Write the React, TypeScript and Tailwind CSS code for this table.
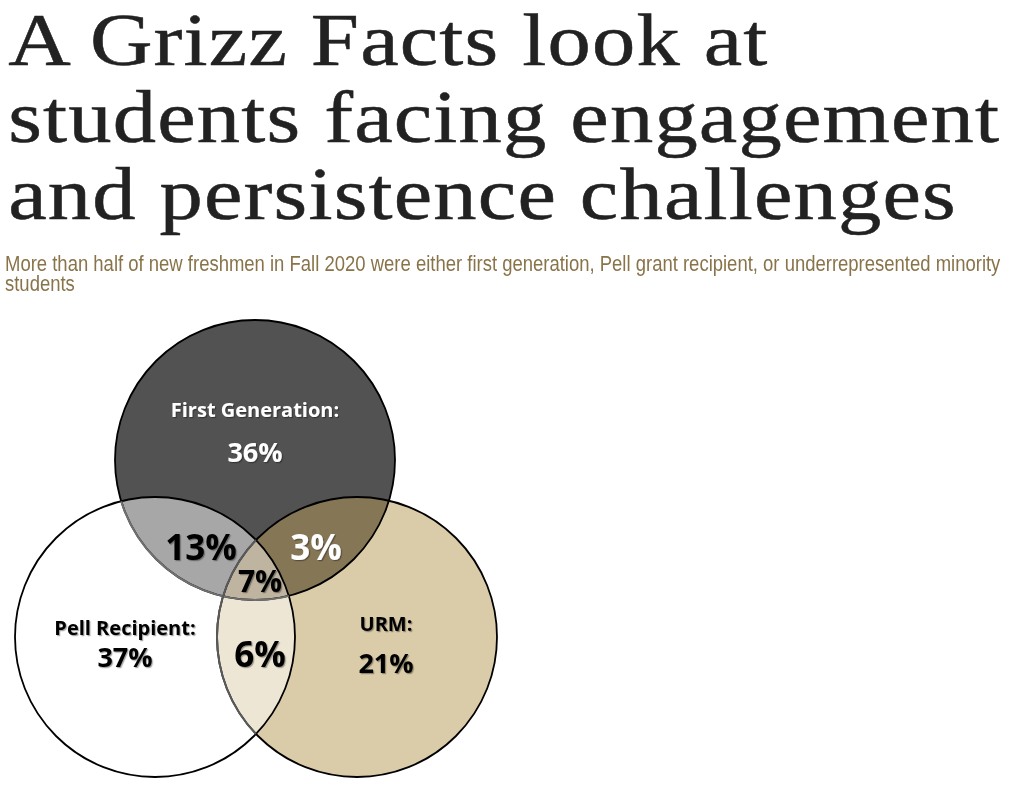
const T = { cx: 255, cy: 150, r: 140 }
const L = { cx: 155, cy: 327, r: 140 }
const R = { cx: 357, cy: 327, r: 140 }

const Venn = () => {
    return (
        <svg width="510" height="475" viewBox="0 0 510 475" className="block">
            <defs>
                <clipPath id="clipL">
                    <circle cx={L.cx} cy={L.cy} r={L.r} />
                </clipPath>
                <clipPath id="clipR">
                    <circle cx={R.cx} cy={R.cy} r={R.r} />
                </clipPath>
                <filter id="shadow" x="-20%" y="-20%" width="140%" height="140%">
                    <feDropShadow dx="1.2" dy="1.2" stdDeviation="0.7" floodColor="#000" floodOpacity="0.35" />
                </filter>
            </defs>

            {/* base circles */}
            <circle cx={L.cx} cy={L.cy} r={L.r} fill="#ffffff" />
            <circle cx={R.cx} cy={R.cy} r={R.r} fill="#dbcca9" />
            <circle cx={T.cx} cy={T.cy} r={T.r} fill="#525252" />

            {/* overlaps */}
            <circle cx={R.cx} cy={R.cy} r={R.r} fill="#ede6d4" clipPath="url(#clipL)" />
            <circle cx={T.cx} cy={T.cy} r={T.r} fill="#a7a7a7" clipPath="url(#clipL)" />
            <circle cx={T.cx} cy={T.cy} r={T.r} fill="#857656" clipPath="url(#clipR)" />
            <g clipPath="url(#clipL)">
                <circle cx={T.cx} cy={T.cy} r={T.r} fill="#beb4a0" clipPath="url(#clipR)" />
            </g>

            {/* outlines */}
            <circle cx={T.cx} cy={T.cy} r={T.r} fill="none" stroke="#000" strokeWidth="1.8" />
            <circle cx={L.cx} cy={L.cy} r={L.r} fill="none" stroke="#000" strokeWidth="1.8" />
            <circle cx={R.cx} cy={R.cy} r={R.r} fill="none" stroke="#000" strokeWidth="1.8" />
            {/* softer inner arcs */}
            <circle cx={T.cx} cy={T.cy} r={T.r} fill="none" stroke="#707070" strokeWidth="2" clipPath="url(#clipL)" />
            <circle cx={R.cx} cy={R.cy} r={R.r} fill="none" stroke="#5a5a5a" strokeWidth="2" clipPath="url(#clipL)" />

            <g fontFamily="'Open Sans', Lato, sans-serif" fontWeight="700" textAnchor="middle" filter="url(#shadow)">
                <text x="255" y="107" fontSize="20" fill="#fff">First Generation:</text>
                <text x="255" y="152" fontSize="27" fill="#fff">36%</text>
                <text x="201" y="250" fontSize="35" fill="#000">13%</text>
                <text x="316" y="250" fontSize="35" fill="#fff">3%</text>
                <text x="260" y="282" fontSize="30" fill="#000">7%</text>
                <text x="260" y="357" fontSize="35" fill="#000">6%</text>
                <text x="125" y="325" fontSize="20" fill="#000">Pell Recipient:</text>
                <text x="125" y="357" fontSize="27" fill="#000">37%</text>
                <text x="386" y="321" fontSize="20" fill="#000">URM:</text>
                <text x="386" y="363" fontSize="27" fill="#000">21%</text>
            </g>
        </svg>
    )
}

const App = () => {
    return (
        <div className="w-[1015px] h-[791px] bg-white overflow-hidden">
            <h1 className="pt-[2px] pl-[7px] w-[860px] origin-left scale-x-[1.17] whitespace-nowrap text-[#222222] text-[74px] leading-[77px] tracking-[1px] font-normal font-['Liberation_Serif','DejaVu_Serif',serif] [-webkit-text-stroke:0.5px_#222222]">
                A Grizz Facts look at
                <br />
                students facing engagement
                <br />
                and persistence challenges
            </h1>
            <p className="mt-[21px] ml-[5px] w-[1200px] origin-left scale-x-[0.84] text-[#89744a] text-[22px] leading-[20px] font-['Liberation_Sans',Arial,sans-serif]">
                More than half of new freshmen in Fall 2020 were either first generation, Pell grant recipient, or underrepresented minority students
            </p>
            <div className="mt-[16px]">
                <Venn />
            </div>
        </div>
    )
}

export default App
